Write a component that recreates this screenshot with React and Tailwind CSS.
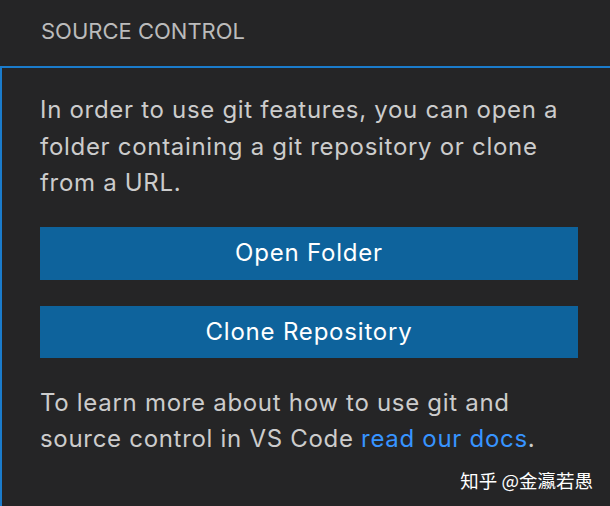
export default function App() {
  return (
    <div className="relative w-[610px] h-[506px] overflow-hidden bg-[#252526] font-['Inter','Noto_Sans',sans-serif]">
      <div className="h-[66px] pl-[41px] pt-[18px] text-[22px] leading-[26px] text-[#bbbbbb] tracking-[0px]">
        SOURCE CONTROL
      </div>
      <div className="h-[440px] border-t-2 border-l-2 border-[#1b7ccc] pl-[38px] pr-[32px] pt-[24px]">
        <p className="text-[24px] leading-[36.5px] text-[#cccccc] tracking-[0.7px]">
          In order to use git features, you can open a folder containing a git repository or clone from a URL.
        </p>
        <div className="mt-[25px] flex flex-col gap-[26px]">
          <button className="h-[53px] w-full bg-[#0e639c] text-white text-[24px] tracking-[0.8px]">Open Folder</button>
          <button className="h-[52px] w-full bg-[#0e639c] text-white text-[24px] tracking-[0.8px]">Clone Repository</button>
        </div>
        <p className="mt-[27px] text-[24px] leading-[36px] text-[#cccccc] tracking-[0.7px]">
          To learn more about how to use git and source control in VS Code{" "}
          <span className="text-[#3794ff]">read our docs</span>.
        </p>
      </div>
      <div className="absolute right-[17px] top-[470px] text-[18.5px] leading-[20px] text-white font-['Noto_Sans_CJK_SC',sans-serif]">
        知乎 @金瀛若愚
      </div>
    </div>
  );
}
